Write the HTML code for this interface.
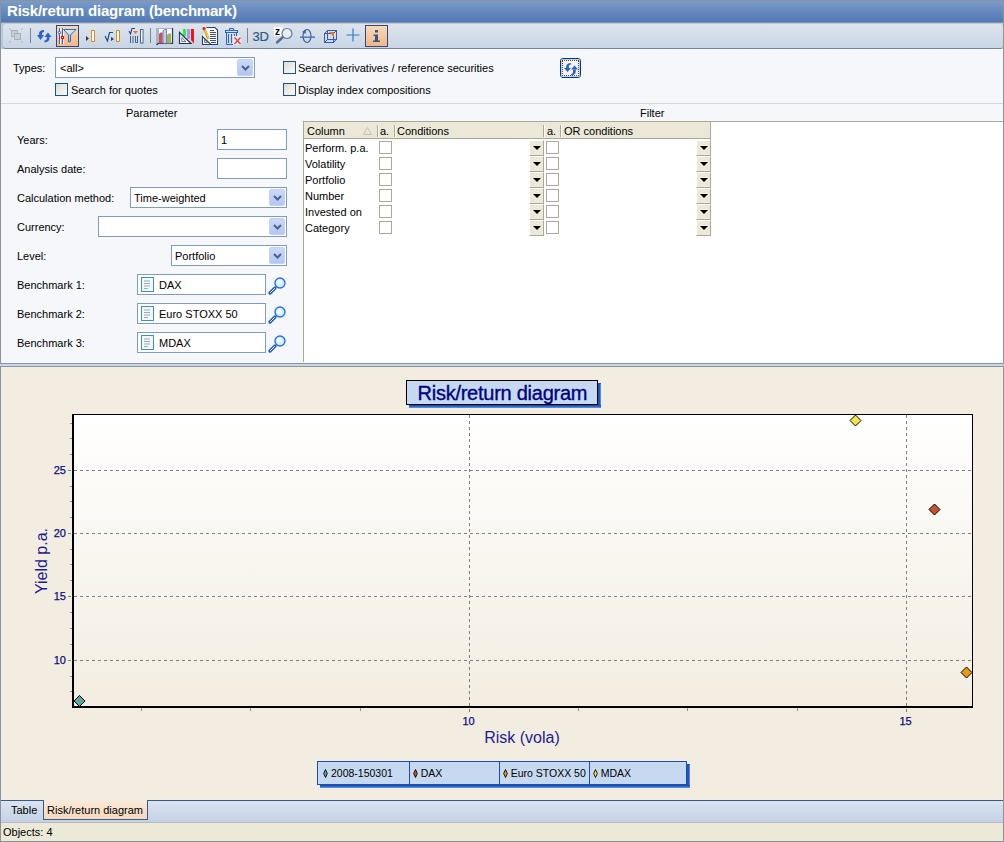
<!DOCTYPE html>
<html><head><meta charset="utf-8">
<style>
*{box-sizing:border-box;margin:0;padding:0}
html,body{width:1004px;height:842px;overflow:hidden;background:#f5f7fb;font-family:"Liberation Sans",sans-serif;font-size:11px;color:#000}
.a{position:absolute}
.lbl{position:absolute;white-space:nowrap;line-height:13px}
.inp{position:absolute;background:#fff;border:1px solid #7f9db9}
.cb{position:absolute;width:13px;height:13px;border:1px solid #1c5180;background:linear-gradient(135deg,#dcdcd7,#fafaf8)}
.ddb{position:absolute;width:16px;height:17px;border-radius:2px;background:linear-gradient(#cbd8f8,#b3c6f5);border:1px solid #c3d1f3}
.ddb svg{position:absolute;left:3px;top:5px}
.gcb{position:absolute;width:13px;height:13px;border:1px solid #aca899;background:#fff}
.gdd{position:absolute;width:15px;height:16px;background:#ece9d8;border-left:1px solid #fff;border-top:1px solid #fff;border-right:1px solid #aca899;border-bottom:1px solid #aca899}
.gdd:after{content:"";position:absolute;left:3px;top:5px;border-left:4px solid transparent;border-right:4px solid transparent;border-top:4px solid #000}
</style></head><body>
<!-- outer frame -->
<div class="a" style="left:0;top:0;width:1004px;height:842px;border:1px solid #8b939b;border-bottom:none"></div>
<!-- title -->
<div class="a" style="left:1px;top:1px;width:1002px;height:21px;background:linear-gradient(#7a9bcb,#5279b4)"></div>
<div class="lbl" style="left:7px;top:2px;color:#fff;font-weight:bold;font-size:15px;letter-spacing:-0.2px;line-height:17px">Risk/return diagram (benchmark)</div>
<div class="a" style="left:1px;top:22px;width:1002px;height:1px;background:#8a939e"></div>
<!-- toolbar -->
<div class="a" style="left:1px;top:23px;width:1002px;height:26px;background:#b9c8dd"></div>
<div class="a" style="left:3px;top:24px;width:1000px;height:25px;background:linear-gradient(#dee4ed,#c8d5e5);border-radius:3px;border-bottom:1px solid #7b848c"></div>
<svg class="a" style="left:0;top:0" width="400" height="50">
<defs><linearGradient id="og" x1="0" y1="0" x2="0" y2="1"><stop offset="0" stop-color="#fbd9b9"/><stop offset="1" stop-color="#f4b586"/></linearGradient><linearGradient id="fg" x1="0" y1="0" x2="0" y2="1"><stop offset="0" stop-color="#d8ecfb"/><stop offset="1" stop-color="#8cc3ef"/></linearGradient></defs>
<g fill="none" stroke="#a9b1bc" stroke-width="1"><rect x="11.5" y="30.5" width="6" height="6" fill="#c6ccd5"/><rect x="14.5" y="33.5" width="6" height="6" fill="#c9cfd8"/><path d="M9 28 L11 30 M23 28 L21 30 M9 43 L11 41 M23 43 L21 41"/></g>
<rect x="30" y="28" width="1" height="15" fill="#7b8593"/>
<rect x="150" y="28" width="1" height="15" fill="#7b8593"/>
<rect x="247" y="28" width="1" height="15" fill="#7b8593"/>
<g fill="#2a62c8"><path d="M37 35 L44 35 L40.5 40 Z"/><path d="M39 35 Q38.5 30 44 30 L44 32 Q41.5 32 42 35 Z"/><path d="M44.5 37 L51.5 37 L48 32.5 Z"/><path d="M47 37 L49.5 37 Q50 42 44.5 42.5 L44.5 40.5 Q47 40.5 47 37 Z"/></g>
<rect x="56.5" y="25.5" width="22" height="21" fill="url(#og)" stroke="#2c4a7a"/>
<path d="M59.5 28 V44 M62.5 28 V44" stroke="#2c62c8" stroke-width="1"/>
<path d="M60.5 28 V44 M63.5 28 V44" stroke="#fff" stroke-width="1" opacity="0.8"/>
<circle cx="59.5" cy="32.5" r="1.2" fill="#fff" stroke="#2c62c8"/>
<rect x="61.5" y="36.5" width="2" height="2" fill="#fff" stroke="#f00" stroke-width="1"/>
<path d="M63.5 29.5 H76 L70.5 35 V41.5 L68.5 42 V35 Z" fill="url(#fg)" stroke="#2d6cbc" stroke-width="1"/>
<path d="M86 36 L89 38.5 L86 41 Z" fill="#223a66"/>
<rect x="91.5" y="30.5" width="3" height="11" fill="#fff" stroke="#e58a1c"/>
<path d="M105 36 L107.5 41 L109.5 32.5 H113" fill="none" stroke="#1f4f8a" stroke-width="1.2"/>
<path d="M111 37 L114 39 L111 41 Z" fill="#223a66"/>
<rect x="116.5" y="30.5" width="3" height="11" fill="#fff" stroke="#e58a1c"/>
<path d="M129 31 L130.5 34 L132 28.5 H135" fill="none" stroke="#1f3f9a" stroke-width="1.1"/>
<path d="M133 31 H138 L135.5 34 Z" fill="#e07a1a"/>
<path d="M130.5 36 V43 M133 36 V43 M135.5 36 V42.5 H137.5 V36" fill="none" stroke="#46628e" stroke-width="1"/>
<rect x="140.5" y="29.5" width="2.5" height="13.5" fill="#fff" stroke="#46628e"/>
<rect x="156" y="28" width="17" height="17" fill="#fff"/><path d="M156 28 H172 V29 H159 V43 L156 45 Z" fill="#a9b6c8"/><path d="M156.5 45 L158.5 43.5 H172.5 V28" fill="none" stroke="#28406c" stroke-width="1.3"/><path d="M159 34 L160.5 32.5 H162.5 V43.5 H159 Z" fill="#c9524e"/><path d="M163 31 L164.5 29.5 H166.5 V43.5 H163 Z" fill="#c4d2ee" stroke="#3a5cc0" stroke-width="0.7"/><path d="M167 35 L168.5 33.5 H171 V43.5 H167 Z" fill="#a3b447"/>
<rect x="183" y="29" width="3" height="7" fill="#33ee33"/>
<rect x="187" y="29" width="3" height="10" fill="#9aa0f0"/>
<path d="M191 29 H194 V43.5 L191 40 Z" fill="#ff1010"/>
<path d="M179.5 32.5 V43.5 H191 Z" fill="#fff" stroke="#1f3660" stroke-width="1.2"/>
<path d="M181.8 37.5 V41.7 H186 Z" fill="none" stroke="#6d6d6d" stroke-width="1"/>
<path d="M206.5 27.5 H215 L217.5 30 V44.5 H202.5 V37" fill="#fff" stroke="#28406c" stroke-width="1.1"/><path d="M210 30.5H214 M210 32.5H216 M210 34.5H216 M210 36.5H216 M210 38.5H216 M210 40.5H216 M211 42.5H216" stroke="#28406c" stroke-width="0.9"/><path d="M202.5 36.5 V44.5 H211 Z" fill="#fff" stroke="#28406c" stroke-width="1.1"/><path d="M204.5 39.5 V42.5 H207.5 Z" fill="none" stroke="#6d6d6d" stroke-width="0.9"/><path d="M204.5 29.5 L208.5 39" stroke="#d9a520" stroke-width="2.8"/><path d="M205 29.5 L208.8 38.5" stroke="#f3d85a" stroke-width="1"/><circle cx="204" cy="28.5" r="1.6" fill="#e02020"/>
<g fill="none" stroke="#2a62c8" stroke-width="1"><rect x="225.5" y="30.5" width="12" height="2"/><path d="M229.5 30 V28.5 H233.5 V30"/><path d="M226.5 33 V44.5 H236.5 V33"/><path d="M228.5 34 V43 M231.5 34 V43 M234.5 34 V43"/></g><rect x="233" y="36" width="8" height="9" fill="#e8ecf2"/><path d="M234.5 37.5 L240.5 44 M240.5 37.5 L234.5 44" stroke="#e23a3a" stroke-width="1.3"/>
<text x="252.5" y="40.5" font-family="Liberation Sans" font-size="13" fill="#2d5a85" stroke="#2d5a85" stroke-width="0.2" letter-spacing="-0.2">3D</text>
<rect x="274" y="27" width="9" height="9" fill="#fff"/>
<text x="275" y="35" font-family="Liberation Sans" font-weight="bold" font-size="10" fill="#000">z</text>
<path d="M277 42.5 L283 37" stroke="#5a6c8c" stroke-width="2.4" stroke-linecap="round"/>
<circle cx="287" cy="33.5" r="5" fill="#e8ecf3" stroke="#6c7c9a" stroke-width="1.2"/>
<ellipse cx="307" cy="36" rx="4" ry="6.5" fill="none" stroke="#3a5c8c" stroke-width="1.1"/>
<rect x="300" y="36.5" width="15" height="1.3" fill="#3a6cb0"/>
<path d="M302 32 L306 29.5 L305.5 34 Z" fill="#2a62d8"/>
<g fill="none" stroke="#3a5cb0" stroke-width="1"><rect x="327.5" y="30.5" width="9" height="9"/><rect x="324.5" y="33.5" width="9" height="9"/><path d="M324.5 33.5 L327.5 30.5 M333.5 33.5 L336.5 30.5 M324.5 42.5 L327.5 39.5 M333.5 42.5 L336.5 39.5"/></g>
<path d="M329 32 H334 V37 Z" fill="#e8780f"/>
<path d="M353 28.5 V41.5 M346.5 35 H359.5" stroke="#2a7fd0" stroke-width="1.2"/>
<rect x="365.5" y="25.5" width="22" height="21" fill="url(#og)" stroke="#2c4a7a"/>
<rect x="375" y="30" width="3" height="2.5" fill="#2c5b8b"/>
<path d="M373.5 34.5 H378 V40.5 H380 V42 H373 V40.5 H375 V36 H373.5 Z" fill="#2c5b8b"/>
</svg>
<!-- search panel -->
<div class="lbl" style="left:13px;top:62px">Types:</div>
<div class="inp" style="left:55px;top:57px;width:200px;height:21px"></div>
<div class="lbl" style="left:60px;top:62px">&lt;all&gt;</div>
<div class="ddb" style="left:237px;top:59px"><svg width="9" height="6"><path d="M1 1 L4.5 4.5 L8 1" stroke="#4d6185" stroke-width="2" fill="none"/></svg></div>
<div class="cb" style="left:55px;top:83px"></div>
<div class="lbl" style="left:71px;top:84px">Search for quotes</div>
<div class="cb" style="left:283px;top:61px"></div>
<div class="lbl" style="left:298px;top:62px">Search derivatives / reference securities</div>
<div class="cb" style="left:283px;top:83px"></div>
<div class="lbl" style="left:298px;top:84px">Display index compositions</div>
<svg class="a" style="left:559px;top:57px" width="24" height="22"><rect x="1.5" y="1.5" width="20" height="19" rx="2.5" fill="#f4f3ee" stroke="#003c74"/><rect x="2.5" y="2.5" width="18" height="17" rx="1" fill="none" stroke="#b9d1f7"/><g fill="#2a62c8"><path d="M5 11 L12 11 L8.5 15 Z"/><path d="M7 11 L7.5 8 Q8.5 6 12 6 L12 7.5 Q9.8 7.5 9.8 9 L10 11 Z"/><path d="M12 12.5 L19 12.5 L15.5 8.5 Z"/><path d="M14 12.5 L17 12.5 L16.5 16 Q15.5 18.2 12 18.2 L12 17 Q14 16.8 14 15 Z"/></g></svg>
<div class="a" style="left:562px;top:60px;width:17px;height:16px;border:1px dotted #6b3a2a"></div>
<div class="a" style="left:1px;top:103px;width:1002px;height:1px;background:#d5d9e0"></div>
<!-- parameter panel -->
<div class="lbl" style="left:126px;top:107px">Parameter</div>
<div class="lbl" style="left:17px;top:134px">Years:</div>
<div class="inp" style="left:217px;top:129px;width:70px;height:21px"></div>
<div class="lbl" style="left:221px;top:134px">1</div>
<div class="lbl" style="left:17px;top:163px">Analysis date:</div>
<div class="inp" style="left:217px;top:158px;width:70px;height:21px"></div>
<div class="lbl" style="left:17px;top:192px">Calculation method:</div>
<div class="inp" style="left:130px;top:187px;width:157px;height:21px"></div>
<div class="lbl" style="left:134px;top:192px">Time-weighted</div>
<div class="ddb" style="left:269px;top:189px"><svg width="9" height="6"><path d="M1 1 L4.5 4.5 L8 1" stroke="#4d6185" stroke-width="2" fill="none"/></svg></div>
<div class="lbl" style="left:17px;top:221px">Currency:</div>
<div class="inp" style="left:98px;top:216px;width:189px;height:21px"></div>
<div class="ddb" style="left:269px;top:218px"><svg width="9" height="6"><path d="M1 1 L4.5 4.5 L8 1" stroke="#4d6185" stroke-width="2" fill="none"/></svg></div>
<div class="lbl" style="left:17px;top:250px">Level:</div>
<div class="inp" style="left:171px;top:245px;width:116px;height:21px"></div>
<div class="lbl" style="left:175px;top:250px">Portfolio</div>
<div class="ddb" style="left:269px;top:247px"><svg width="9" height="6"><path d="M1 1 L4.5 4.5 L8 1" stroke="#4d6185" stroke-width="2" fill="none"/></svg></div>
<div class="lbl" style="left:17px;top:279px">Benchmark 1:</div>
<div class="inp" style="left:137px;top:274px;width:129px;height:21px"></div>
<svg class="a" style="left:141px;top:277px" width="13" height="15"><rect x="0.5" y="0.5" width="12" height="14" fill="#f4f8fb" stroke="#3a8fd0"/><path d="M3 4H9M3 6.5H9M3 9H9M3 11.5H7" stroke="#9aa8b4" stroke-width="1"/></svg>
<div class="lbl" style="left:159px;top:279px">DAX</div>
<svg class="a" style="left:268px;top:277px" width="19" height="18"><path d="M2 16 L7 11" stroke="#1f5bc0" stroke-width="3.2" stroke-linecap="round"/><path d="M2.2 15.8 L6.8 11.2" stroke="#fff" stroke-width="1"/><circle cx="12" cy="6" r="5" fill="#c9f0fb" stroke="#2f6fd0" stroke-width="1.4"/><circle cx="11" cy="5" r="2.5" fill="#effcff"/></svg>
<div class="lbl" style="left:17px;top:308px">Benchmark 2:</div>
<div class="inp" style="left:137px;top:303px;width:129px;height:21px"></div>
<svg class="a" style="left:141px;top:306px" width="13" height="15"><rect x="0.5" y="0.5" width="12" height="14" fill="#f4f8fb" stroke="#3a8fd0"/><path d="M3 4H9M3 6.5H9M3 9H9M3 11.5H7" stroke="#9aa8b4" stroke-width="1"/></svg>
<div class="lbl" style="left:159px;top:308px">Euro STOXX 50</div>
<svg class="a" style="left:268px;top:306px" width="19" height="18"><path d="M2 16 L7 11" stroke="#1f5bc0" stroke-width="3.2" stroke-linecap="round"/><path d="M2.2 15.8 L6.8 11.2" stroke="#fff" stroke-width="1"/><circle cx="12" cy="6" r="5" fill="#c9f0fb" stroke="#2f6fd0" stroke-width="1.4"/><circle cx="11" cy="5" r="2.5" fill="#effcff"/></svg>
<div class="lbl" style="left:17px;top:337px">Benchmark 3:</div>
<div class="inp" style="left:137px;top:332px;width:129px;height:21px"></div>
<svg class="a" style="left:141px;top:335px" width="13" height="15"><rect x="0.5" y="0.5" width="12" height="14" fill="#f4f8fb" stroke="#3a8fd0"/><path d="M3 4H9M3 6.5H9M3 9H9M3 11.5H7" stroke="#9aa8b4" stroke-width="1"/></svg>
<div class="lbl" style="left:159px;top:337px">MDAX</div>
<svg class="a" style="left:268px;top:335px" width="19" height="18"><path d="M2 16 L7 11" stroke="#1f5bc0" stroke-width="3.2" stroke-linecap="round"/><path d="M2.2 15.8 L6.8 11.2" stroke="#fff" stroke-width="1"/><circle cx="12" cy="6" r="5" fill="#c9f0fb" stroke="#2f6fd0" stroke-width="1.4"/><circle cx="11" cy="5" r="2.5" fill="#effcff"/></svg>
<!-- filter panel -->
<div class="lbl" style="left:640px;top:107px">Filter</div>
<div class="a" style="left:303px;top:121px;width:700px;height:241px;background:#fff;border-top:1px solid #aca899"></div>
<div class="a" style="left:303px;top:121px;width:1px;height:241px;background:#aca899"></div>
<div class="a" style="left:304px;top:122px;width:406px;height:17px;background:#ebe8d8;border-bottom:1px solid #aca899"></div>
<div class="a" style="left:710px;top:122px;width:1px;height:113px;background:#aca899"></div>
<div class="a" style="left:377px;top:125px;width:1px;height:12px;background:#aca899"></div>
<div class="a" style="left:378px;top:125px;width:1px;height:12px;background:#fff"></div>
<div class="a" style="left:394px;top:125px;width:1px;height:12px;background:#aca899"></div>
<div class="a" style="left:395px;top:125px;width:1px;height:12px;background:#fff"></div>
<div class="a" style="left:543px;top:125px;width:1px;height:12px;background:#aca899"></div>
<div class="a" style="left:544px;top:125px;width:1px;height:12px;background:#fff"></div>
<div class="a" style="left:560px;top:125px;width:1px;height:12px;background:#aca899"></div>
<div class="a" style="left:561px;top:125px;width:1px;height:12px;background:#fff"></div>
<div class="lbl" style="left:307px;top:125px">Column</div>
<svg class="a" style="left:363px;top:127px" width="9" height="8"><path d="M4.5 0.5 L8.5 7.5 H0.5 Z" fill="none" stroke="#c5c2b2"/></svg>
<div class="lbl" style="left:380px;top:125px">a.</div>
<div class="lbl" style="left:397px;top:125px">Conditions</div>
<div class="lbl" style="left:547px;top:125px">a.</div>
<div class="lbl" style="left:564px;top:125px">OR conditions</div>
<div class="lbl" style="left:305px;top:142px">Perform. p.a.</div>
<div class="gcb" style="left:379px;top:141px"></div>
<div class="gdd" style="left:529px;top:140px"></div>
<div class="gcb" style="left:546px;top:141px"></div>
<div class="gdd" style="left:696px;top:140px"></div>
<div class="lbl" style="left:305px;top:158px">Volatility</div>
<div class="gcb" style="left:379px;top:157px"></div>
<div class="gdd" style="left:529px;top:156px"></div>
<div class="gcb" style="left:546px;top:157px"></div>
<div class="gdd" style="left:696px;top:156px"></div>
<div class="lbl" style="left:305px;top:174px">Portfolio</div>
<div class="gcb" style="left:379px;top:173px"></div>
<div class="gdd" style="left:529px;top:172px"></div>
<div class="gcb" style="left:546px;top:173px"></div>
<div class="gdd" style="left:696px;top:172px"></div>
<div class="lbl" style="left:305px;top:190px">Number</div>
<div class="gcb" style="left:379px;top:189px"></div>
<div class="gdd" style="left:529px;top:188px"></div>
<div class="gcb" style="left:546px;top:189px"></div>
<div class="gdd" style="left:696px;top:188px"></div>
<div class="lbl" style="left:305px;top:206px">Invested on</div>
<div class="gcb" style="left:379px;top:205px"></div>
<div class="gdd" style="left:529px;top:204px"></div>
<div class="gcb" style="left:546px;top:205px"></div>
<div class="gdd" style="left:696px;top:204px"></div>
<div class="lbl" style="left:305px;top:222px">Category</div>
<div class="gcb" style="left:379px;top:221px"></div>
<div class="gdd" style="left:529px;top:220px"></div>
<div class="gcb" style="left:546px;top:221px"></div>
<div class="gdd" style="left:696px;top:220px"></div>
<!-- splitter -->
<div class="a" style="left:1px;top:362px;width:1002px;height:1px;background:#f5f7fb"></div>
<div class="a" style="left:0px;top:363px;width:1004px;height:4px;background:#c9d6e6;border-top:1px solid #8a96a4;border-bottom:1px solid #8a96a4"></div>
<!-- chart -->
<div class="a" style="left:1px;top:367px;width:1002px;height:433px;background:#f3ede1"></div>
<svg class="a" style="left:0;top:0" width="1004" height="842">
<defs><linearGradient id="pg" x1="0" y1="0" x2="0" y2="1"><stop offset="0" stop-color="#ffffff"/><stop offset="1" stop-color="#f3ede1"/></linearGradient><linearGradient id="sg" x1="0" y1="0" x2="0" y2="1"><stop offset="0" stop-color="#0b3c9c"/><stop offset="1" stop-color="#5e9cf2"/></linearGradient></defs>
<rect x="73" y="414" width="899" height="293" fill="url(#pg)"/>
<line x1="68" y1="660.5" x2="971" y2="660.5" stroke="#808080" stroke-dasharray="3 3"/>
<line x1="68" y1="596.5" x2="971" y2="596.5" stroke="#808080" stroke-dasharray="3 3"/>
<line x1="68" y1="533.5" x2="971" y2="533.5" stroke="#808080" stroke-dasharray="3 3"/>
<line x1="68" y1="470.5" x2="971" y2="470.5" stroke="#808080" stroke-dasharray="3 3"/>
<line x1="469.5" y1="415" x2="469.5" y2="712" stroke="#808080" stroke-dasharray="3 3"/>
<line x1="906.5" y1="415" x2="906.5" y2="712" stroke="#808080" stroke-dasharray="3 3"/>
<line x1="70" y1="423.5" x2="72" y2="423.5" stroke="#909090"/>
<line x1="70" y1="438.5" x2="72" y2="438.5" stroke="#909090"/>
<line x1="70" y1="454.5" x2="72" y2="454.5" stroke="#909090"/>
<line x1="70" y1="486.5" x2="72" y2="486.5" stroke="#909090"/>
<line x1="70" y1="501.5" x2="72" y2="501.5" stroke="#909090"/>
<line x1="70" y1="517.5" x2="72" y2="517.5" stroke="#909090"/>
<line x1="70" y1="549.5" x2="72" y2="549.5" stroke="#909090"/>
<line x1="70" y1="564.5" x2="72" y2="564.5" stroke="#909090"/>
<line x1="70" y1="580.5" x2="72" y2="580.5" stroke="#909090"/>
<line x1="70" y1="612.5" x2="72" y2="612.5" stroke="#909090"/>
<line x1="70" y1="628.5" x2="72" y2="628.5" stroke="#909090"/>
<line x1="70" y1="644.5" x2="72" y2="644.5" stroke="#909090"/>
<line x1="70" y1="676.5" x2="72" y2="676.5" stroke="#909090"/>
<line x1="70" y1="691.5" x2="72" y2="691.5" stroke="#909090"/>
<line x1="141.5" y1="708" x2="141.5" y2="711" stroke="#909090"/>
<line x1="250.5" y1="708" x2="250.5" y2="711" stroke="#909090"/>
<line x1="360.5" y1="708" x2="360.5" y2="711" stroke="#909090"/>
<line x1="578.5" y1="708" x2="578.5" y2="711" stroke="#909090"/>
<line x1="687.5" y1="708" x2="687.5" y2="711" stroke="#909090"/>
<line x1="797.5" y1="708" x2="797.5" y2="711" stroke="#909090"/>
<rect x="72.5" y="414.5" width="900" height="292" fill="none" stroke="#000"/>
<line x1="73" y1="414" x2="73" y2="708" stroke="#000" stroke-width="2"/>
<line x1="72" y1="707" x2="973" y2="707" stroke="#000" stroke-width="2"/>
<text x="66" y="664" text-anchor="end" font-family="Liberation Sans" font-size="11" fill="#0c0c80" stroke="#0c0c80" stroke-width="0.25">10</text>
<text x="66" y="600" text-anchor="end" font-family="Liberation Sans" font-size="11" fill="#0c0c80" stroke="#0c0c80" stroke-width="0.25">15</text>
<text x="66" y="537" text-anchor="end" font-family="Liberation Sans" font-size="11" fill="#0c0c80" stroke="#0c0c80" stroke-width="0.25">20</text>
<text x="66" y="474" text-anchor="end" font-family="Liberation Sans" font-size="11" fill="#0c0c80" stroke="#0c0c80" stroke-width="0.25">25</text>
<text x="468.5" y="725" text-anchor="middle" font-family="Liberation Sans" font-size="11" fill="#0c0c80" stroke="#0c0c80" stroke-width="0.25">10</text>
<text x="905.5" y="725" text-anchor="middle" font-family="Liberation Sans" font-size="11" fill="#0c0c80" stroke="#0c0c80" stroke-width="0.25">15</text>
<text x="522" y="743" text-anchor="middle" font-family="Liberation Sans" font-size="16" fill="#1c1c94">Risk (vola)</text>
<text transform="translate(47,561) rotate(-90)" text-anchor="middle" font-family="Liberation Sans" font-size="16" fill="#1c1c94">Yield p.a.</text>
<path d="M79.5 695.5 L85.0 701 L79.5 706.5 L74.0 701 Z" fill="#5ea79f" stroke="#000" stroke-width="1"/>
<path d="M855.5 415.0 L861.0 420.5 L855.5 426.0 L850.0 420.5 Z" fill="#f6e44c" stroke="#000" stroke-width="1"/>
<path d="M934.5 504.0 L940.0 509.5 L934.5 515.0 L929.0 509.5 Z" fill="#c65330" stroke="#000" stroke-width="1"/>
<path d="M966.5 667.0 L972.0 672.5 L966.5 678.0 L961.0 672.5 Z" fill="#e89a10" stroke="#000" stroke-width="1"/>
<rect x="598" y="383" width="3" height="25" fill="#1d55c4"/><rect x="600" y="384" width="1" height="24" fill="#4f8ae6"/><rect x="409" y="405" width="192" height="3" fill="url(#sg)"/>
<rect x="406.5" y="380.5" width="191" height="24" fill="#c6d9f1" stroke="#000"/>
<text x="417.5" y="400" font-family="Liberation Sans" font-size="20" letter-spacing="-0.25" fill="#000080" stroke="#000080" stroke-width="0.35">Risk/return diagram</text>
<rect x="687" y="764" width="3" height="24" fill="#1d55c4"/><rect x="689" y="765" width="1" height="23" fill="#4f8ae6"/><rect x="320" y="785" width="370" height="3" fill="url(#sg)"/>
<rect x="317.5" y="761.5" width="369" height="23" fill="#c6d9f1" stroke="#1d4fa6"/>
<line x1="409.5" y1="762" x2="409.5" y2="784" stroke="#1d4fa6"/>
<line x1="499.5" y1="762" x2="499.5" y2="784" stroke="#1d4fa6"/>
<line x1="589.5" y1="762" x2="589.5" y2="784" stroke="#1d4fa6"/>
<path d="M325.5 769.5 L327.3 773.5 L325.5 777.5 L323.7 773.5 Z" fill="#5ea79f" stroke="#000" stroke-width="0.9"/>
<text x="331" y="777" font-family="Liberation Sans" font-size="10.5" fill="#000">2008-150301</text>
<path d="M415.5 769.5 L417.3 773.5 L415.5 777.5 L413.7 773.5 Z" fill="#c65330" stroke="#000" stroke-width="0.9"/>
<text x="420.7" y="777" font-family="Liberation Sans" font-size="10.5" fill="#000">DAX</text>
<path d="M505.5 769.5 L507.3 773.5 L505.5 777.5 L503.7 773.5 Z" fill="#e89a10" stroke="#000" stroke-width="0.9"/>
<text x="510.7" y="777" font-family="Liberation Sans" font-size="10.5" fill="#000">Euro STOXX 50</text>
<path d="M595.5 769.5 L597.3 773.5 L595.5 777.5 L593.7 773.5 Z" fill="#f6e44c" stroke="#000" stroke-width="0.9"/>
<text x="600.7" y="777" font-family="Liberation Sans" font-size="10.5" fill="#000">MDAX</text>
</svg>
<!-- tabs -->
<div class="a" style="left:1px;top:800px;width:1002px;height:22px;background:linear-gradient(#dbe4f1,#c3d2e6);border-top:1px solid #3a5a85"></div>
<div class="a" style="left:43px;top:800px;width:105px;height:20px;background:linear-gradient(#f9eadb,#f6d9bd);border:1px solid #3a5a85;border-top:none"></div>
<div class="lbl" style="left:11px;top:804px">Table</div>
<div class="lbl" style="left:47px;top:804px">Risk/return diagram</div>
<!-- status -->
<div class="a" style="left:1px;top:822px;width:1002px;height:20px;background:#ece9d8;border-top:1px solid #b6b9bd;border-bottom:1px solid #8b939b"></div>
<div class="lbl" style="left:3px;top:826px">Objects: 4</div>
</body></html>
